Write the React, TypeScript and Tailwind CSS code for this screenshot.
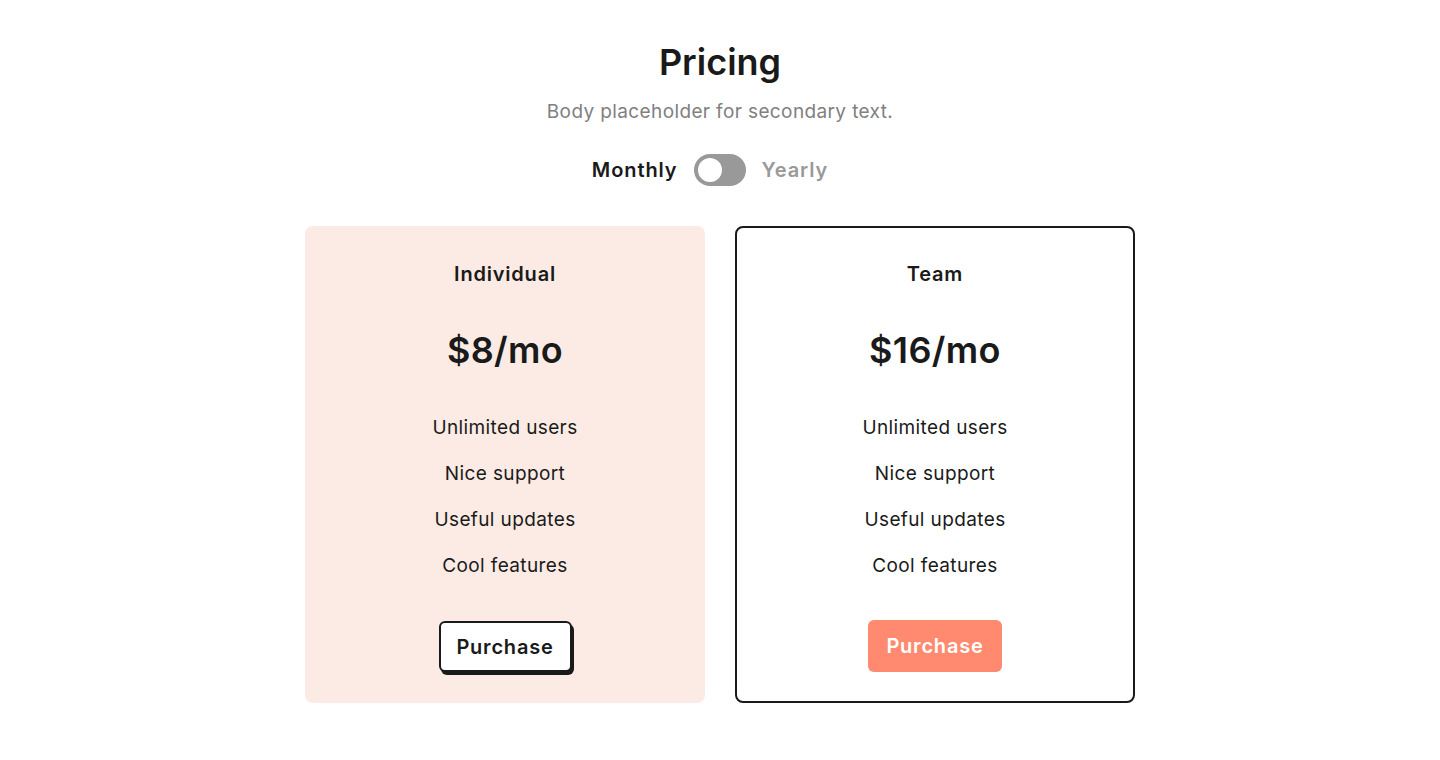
import React from 'react';

interface Plan {
  name: string;
  price: string;
  features: string[];
  highlighted: boolean;
}

const plans: Plan[] = [
  {
    name: 'Individual',
    price: '$8/mo',
    features: ['Unlimited users', 'Nice support', 'Useful updates', 'Cool features'],
    highlighted: true,
  },
  {
    name: 'Team',
    price: '$16/mo',
    features: ['Unlimited users', 'Nice support', 'Useful updates', 'Cool features'],
    highlighted: false,
  },
];

const PlanCard: React.FC<{ plan: Plan }> = ({ plan }) => {
  return (
    <div
      className={
        plan.highlighted
          ? 'w-[400px] h-[477px] rounded-lg bg-[#fbebe4] flex flex-col items-center pt-[34px]'
          : 'w-[400px] h-[477px] rounded-lg border-2 border-[#1a1a1a] bg-white flex flex-col items-center pt-[32px]'
      }
    >
      <h3 className="text-[20px] leading-[28px] font-semibold tracking-[0.04em] text-[#1a1a1a]">{plan.name}</h3>
      <p className="mt-[42px] text-[36px] leading-[40px] font-semibold tracking-[0.01em] text-[#1a1a1a]">{plan.price}</p>
      <ul className="mt-[45px] flex flex-col gap-[20px] items-center">
        {plan.features.map((f) => (
          <li key={f} className="text-[19px] leading-[26px] tracking-[0.02em] text-[#1a1a1a]">
            {f}
          </li>
        ))}
      </ul>
      {plan.highlighted ? (
        <button className="mt-[42px] h-[51px] w-[133px] rounded-md border-2 border-[#1a1a1a] bg-white text-[20px] font-semibold tracking-[0.04em] text-[#1a1a1a] shadow-[2px_3px_0_0_#1a1a1a]">
          Purchase
        </button>
      ) : (
        <button className="mt-[41px] h-[52px] w-[134px] rounded-md bg-[#ff8a70] text-[20px] font-semibold tracking-[0.04em] text-white">
          Purchase
        </button>
      )}
    </div>
  );
};

const App: React.FC = () => {
  return (
    <div
      className="min-h-screen bg-white flex flex-col items-center pt-[38px]"
      style={{ fontFamily: 'Inter, "Noto Sans", sans-serif' }}
    >
      <h1 className="text-[36px] leading-[48px] font-semibold text-[#1a1a1a]">Pricing</h1>
      <p className="mt-[13px] text-[19px] leading-[26px] tracking-[0.02em] text-[#808080]">Body placeholder for secondary text.</p>
      <div className="mt-[29px] pr-[20px] flex items-center gap-4">
        <span className="text-[20px] leading-[28px] font-semibold tracking-[0.045em] text-[#1a1a1a]">Monthly</span>
        <div className="w-[52px] h-[32px] rounded-full bg-[#999999] flex items-center px-[4px]">
          <div className="w-[24px] h-[24px] rounded-full bg-white" />
        </div>
        <span className="text-[20px] leading-[28px] font-semibold tracking-[0.045em] text-[#999999]">Yearly</span>
      </div>
      <div className="mt-[40px] flex gap-[30px]">
        {plans.map((p) => (
          <PlanCard key={p.name} plan={p} />
        ))}
      </div>
    </div>
  );
};

export default App;
